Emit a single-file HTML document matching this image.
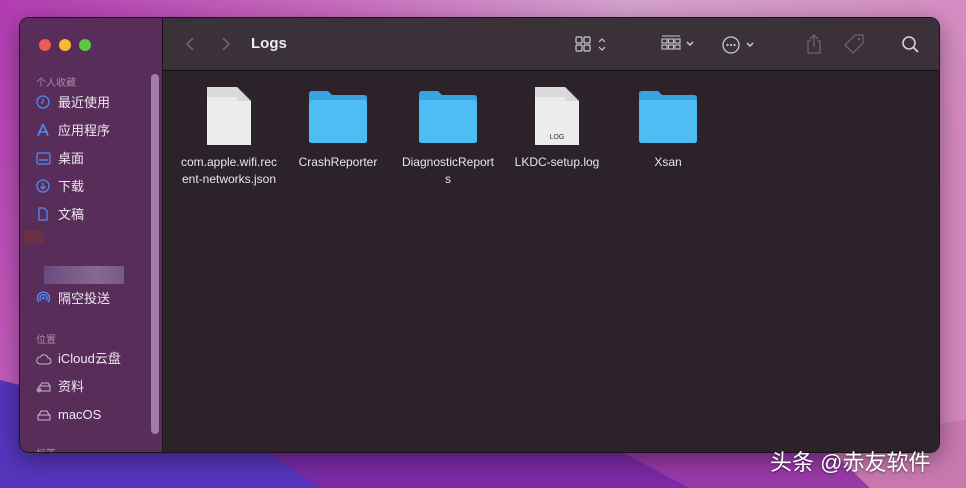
<!DOCTYPE html>
<html><head><meta charset="utf-8"><style>
*{margin:0;padding:0;box-sizing:border-box}
body{width:966px;height:488px;overflow:hidden;position:relative;font-family:"Liberation Sans","Noto Sans CJK SC",sans-serif;background:#c060b8}
.bg{position:absolute;left:0;top:0}
.win{position:absolute;left:19px;top:17px;width:921px;height:436px;border-radius:10px;overflow:hidden;border:1px solid #1a141a;box-shadow:0 6px 24px rgba(0,0,0,.4)}
.side{position:absolute;left:0;top:0;width:143px;height:100%;background:#582d5a;border-right:1px solid #1c141c}
.main{position:absolute;left:143px;top:0;right:0;bottom:0;background:#2b2329}
.tb{position:absolute;left:0;top:0;right:0;height:53px;background:#3a3238;border-bottom:1px solid #151015}
.dot{position:absolute;top:21px;width:12px;height:12px;border-radius:50%}
.sh{position:absolute;left:16px;font-size:10px;color:#a78aa6}
.it{position:absolute;left:16px;font-size:13px;color:#f0e8f0;height:18px;line-height:18px}
.it i{display:inline-block;width:16px;height:14px;vertical-align:-2px;margin-right:6px}
.scroll{position:absolute;left:131px;top:56px;width:8px;height:360px;border-radius:4px;background:#a27ea6}
.file{position:absolute;width:110px;text-align:center;font-size:12px;color:#ece6ec;line-height:17px}
</style></head><body>
<svg class="bg" width="966" height="488">
<defs><linearGradient id="t" x1="0" y1="0" x2="1" y2="0.3"><stop offset="0" stop-color="#b23cb2"/><stop offset=".3" stop-color="#c868be"/><stop offset=".6" stop-color="#d6a2d0"/><stop offset="1" stop-color="#d487bf"/></linearGradient></defs>
<rect width="966" height="488" fill="url(#t)"/>
<polygon points="0,380 160,420 300,460 330,488 0,488" fill="#5535bb"/>
<polygon points="250,440 600,440 690,488 320,488" fill="#7a2aa6"/>
<polygon points="600,440 820,440 870,488 690,488" fill="#9a3aa8"/>
<polygon points="820,440 966,420 966,488 870,488" fill="#c879b0"/>
</svg>
<div class="win">
 <div class="side">
  <div class="dot" style="left:19px;background:#ee5b54"></div>
  <div class="dot" style="left:39px;background:#f4bb2e"></div>
  <div class="dot" style="left:59px;background:#5ec53f"></div>
  <div class="sh" style="top:56px">个人收藏</div>
  <div class="it" style="top:76px"><i><svg width="14" height="14"><circle cx="7" cy="7" r="6" fill="none" stroke="#4f8cf0" stroke-width="1.3"/><path d="M7 3.5V7L5 8.5" stroke="#4f8cf0" fill="none" stroke-width="1.3"/></svg></i>最近使用</div>
  <div class="it" style="top:104px"><i><svg width="14" height="14"><path d="M7 1L2 13M7 1l5 12M2 9h10" stroke="#4f8cf0" fill="none" stroke-width="1.6"/></svg></i>应用程序</div>
  <div class="it" style="top:132px"><i><svg width="15" height="13"><rect x="1" y="1" width="13" height="11" rx="1.5" fill="none" stroke="#4f8cf0" stroke-width="1.3"/><path d="M3 8h9" stroke="#4f8cf0" stroke-width="1.5"/></svg></i>桌面</div>
  <div class="it" style="top:160px"><i><svg width="14" height="14"><circle cx="7" cy="7" r="6" fill="none" stroke="#4f8cf0" stroke-width="1.3"/><path d="M7 3.5v6M4.5 7.5L7 10l2.5-2.5" stroke="#4f8cf0" fill="none" stroke-width="1.3"/></svg></i>下载</div>
  <div class="it" style="top:188px"><i><svg width="14" height="14"><path d="M3 1h5l3 3v9H3z" fill="none" stroke="#4f8cf0" stroke-width="1.3"/></svg></i>文稿</div>
  <div style="position:absolute;left:4px;top:212px;width:20px;height:14px;background:#6a3048"></div>
  <div style="position:absolute;left:24px;top:248px;width:80px;height:18px;background:linear-gradient(90deg,#6a4e86,#7a628a,#8e6e98,#7a5e8c);opacity:.9"></div>
  <div class="it" style="top:272px"><i><svg width="15" height="15"><path d="M3 12A6 6 0 1 1 12 12M5 10.5A3.5 3.5 0 1 1 10 10.5" stroke="#4f8cf0" fill="none" stroke-width="1.4"/><circle cx="7.5" cy="8" r="1.4" fill="#4f8cf0"/></svg></i>隔空投送</div>
  <div class="sh" style="top:313px">位置</div>
  <div class="it" style="top:332px"><i><svg width="16" height="12"><path d="M4 11h8a3 3 0 0 0 0-6 4 4 0 0 0-7.5-1A3.5 3.5 0 0 0 4 11z" fill="none" stroke="#c9b8c9" stroke-width="1"/></svg></i>iCloud云盘</div>
  <div class="it" style="top:360px"><i><svg width="16" height="12"><path d="M3 5h11v5H3zM4 5l2-3h6l2 3" fill="none" stroke="#c9b8c9" stroke-width="1"/><circle cx="3" cy="9" r="2.5" fill="#aa98aa"/></svg></i>资料</div>
  <div class="it" style="top:388px"><i><svg width="16" height="12"><path d="M2 6h12v5H2zM3 6l2-4h6l2 4" fill="none" stroke="#c9b8c9" stroke-width="1"/></svg></i>macOS</div>
  <div class="sh" style="top:427px">标签</div>
  <div class="scroll"></div>
 </div>
 <div class="main">
  <div class="tb">
   <svg style="position:absolute;left:22px;top:18px" width="10" height="16"><path d="M8 2L2 8l6 6" stroke="#6e646c" fill="none" stroke-width="1.6"/></svg>
   <svg style="position:absolute;left:58px;top:18px" width="10" height="16"><path d="M2 2l6 6-6 6" stroke="#6e646c" fill="none" stroke-width="1.6"/></svg>
   <div style="position:absolute;left:88px;top:17px;font-size:15px;font-weight:bold;color:#eee">Logs</div>
   <svg style="position:absolute;left:412px;top:18px" width="36" height="18"><g fill="none" stroke="#cfc8ce" stroke-width="1.2"><rect x="1" y="1" width="6" height="6" rx="1"/><rect x="9" y="1" width="6" height="6" rx="1"/><rect x="1" y="9" width="6" height="6" rx="1"/><rect x="9" y="9" width="6" height="6" rx="1"/><path d="M24 6l3-3 3 3M24 11l3 3 3-3"/></g></svg>
   <svg style="position:absolute;left:498px;top:17px" width="38" height="18"><g fill="none" stroke="#cfc8ce" stroke-width="1.1"><path d="M1 1h18"/><rect x="1" y="4" width="5" height="4"/><rect x="7.5" y="4" width="5" height="4"/><rect x="14" y="4" width="5" height="4"/><rect x="1" y="10" width="5" height="4"/><rect x="7.5" y="10" width="5" height="4"/><rect x="14" y="10" width="5" height="4"/><path d="M26 7l3 3 3-3" stroke-width="1.5"/></g></svg>
   <svg style="position:absolute;left:558px;top:17px" width="36" height="20"><g fill="none" stroke="#cfc8ce" stroke-width="1.3"><circle cx="10" cy="10" r="8"/><path d="M26 8l3 3 3-3" stroke-width="1.5"/></g><g fill="#cfc8ce"><circle cx="6.5" cy="10" r="1.1"/><circle cx="10" cy="10" r="1.1"/><circle cx="13.5" cy="10" r="1.1"/></g></svg>
   <svg style="position:absolute;left:642px;top:15px" width="18" height="22"><path d="M6 8H3v12h12V8h-3M9 2v12M5 6l4-4 4 4" fill="none" stroke="#6e646c" stroke-width="1.3"/></svg>
   <svg style="position:absolute;left:680px;top:15px" width="22" height="22"><path d="M12 2h8v8L10 20 2 12z" fill="none" stroke="#6e646c" stroke-width="1.3"/><circle cx="16" cy="6" r="1.3" fill="#6e646c"/></svg>
   <svg style="position:absolute;left:738px;top:17px" width="20" height="20"><circle cx="8" cy="8" r="6" fill="none" stroke="#d8d0d6" stroke-width="1.6"/><path d="M12.5 12.5L17 17" stroke="#d8d0d6" stroke-width="1.8"/></svg>
  </div>
  <svg style="position:absolute;left:43px;top:68px" width="46" height="60"><path d="M1 1h30l14 14v44H1z" fill="#ececec"/><path d="M1 1h30v10H1z" fill="#cfcfcf" opacity=".6"/><path d="M31 1v14h14" fill="#d8d8d8"/></svg>
  <div class="file" style="left:11px;top:136px">com.apple.wifi.rec<br>ent-networks.json</div>
  <svg style="position:absolute;left:144px;top:72px" width="62" height="54"><path d="M2 4q0-3 3-3h16l4 4h32q3 0 3 3v43q0 2-3 2H5q-3 0-3-2z" fill="#3aa2e0"/><rect x="2" y="10" width="58" height="43" rx="3" fill="#4dbdf4"/></svg>
  <div class="file" style="left:120px;top:136px">CrashReporter</div>
  <svg style="position:absolute;left:254px;top:72px" width="62" height="54"><path d="M2 4q0-3 3-3h16l4 4h32q3 0 3 3v43q0 2-3 2H5q-3 0-3-2z" fill="#3aa2e0"/><rect x="2" y="10" width="58" height="43" rx="3" fill="#4dbdf4"/></svg>
  <div class="file" style="left:230px;top:136px">DiagnosticReport<br>s</div>
  <svg style="position:absolute;left:371px;top:68px" width="46" height="60"><path d="M1 1h30l14 14v44H1z" fill="#ececec"/><path d="M1 1h30v10H1z" fill="#cfcfcf" opacity=".6"/><path d="M31 1v14h14" fill="#d8d8d8"/><text x="23" y="53" font-size="7" text-anchor="middle" fill="#333" font-family="Liberation Sans">LOG</text></svg>
  <div class="file" style="left:339px;top:136px">LKDC-setup.log</div>
  <svg style="position:absolute;left:474px;top:72px" width="62" height="54"><path d="M2 4q0-3 3-3h16l4 4h32q3 0 3 3v43q0 2-3 2H5q-3 0-3-2z" fill="#3aa2e0"/><rect x="2" y="10" width="58" height="43" rx="3" fill="#4dbdf4"/></svg>
  <div class="file" style="left:450px;top:136px">Xsan</div>
 </div>
</div>
<div style="position:absolute;left:770px;top:445px;font-size:22px;color:#fff;text-shadow:0 1px 2px rgba(0,0,0,.5)">头条 @赤友软件</div>
</body></html>
